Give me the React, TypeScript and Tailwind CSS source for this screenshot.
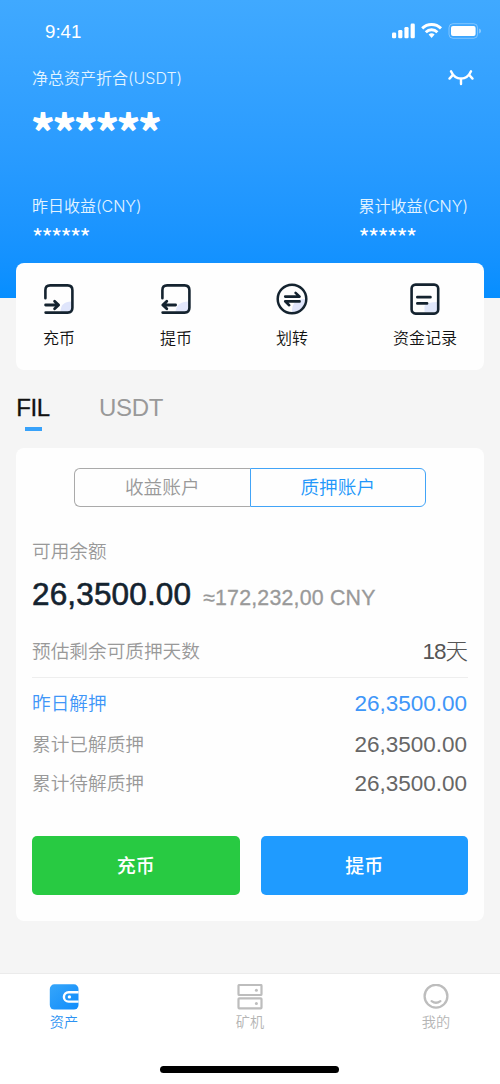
import React from "react";

const latin = "font-[Inter,'Noto_Sans_CJK_SC',sans-serif]";
const numeric = "font-['Liberation_Sans','Noto_Sans_CJK_SC',sans-serif]";
const ink = "#14232f";

function StatusIcons() {
  return (
    <svg width="90" height="16" viewBox="0 0 90 16" fill="white">
      <rect x="0" y="9.5" width="4.2" height="5.8" rx="1.3" />
      <rect x="6.2" y="7" width="4.2" height="8.3" rx="1.3" />
      <rect x="12.4" y="4" width="4.2" height="11.3" rx="1.3" />
      <rect x="18.6" y="0.6" width="4.2" height="14.7" rx="1.3" />
      <g fill="none" stroke="white" strokeWidth="2.9">
        <path d="M30.2 5.4 A13.4 13.4 0 0 1 49 5.4" />
        <path d="M33.8 9.2 A8.2 8.2 0 0 1 45.4 9.2" />
      </g>
      <path d="M36.6 11.6 A4.6 4.6 0 0 1 42.6 11.6 L39.6 14.9 Z" />
      <rect x="57" y="0.7" width="28.6" height="14.6" rx="4" fill="none" stroke="white" strokeOpacity="0.35" />
      <rect x="59" y="2.9" width="24.6" height="10.2" rx="2" />
      <path d="M87.2 5.5 Q89 6.3 89 8 Q89 9.7 87.2 10.5 Z" fillOpacity="0.45" />
    </svg>
  );
}

function ClosedEye() {
  return (
    <svg width="26" height="16" viewBox="0 0 26 16" fill="none" stroke="white" strokeWidth="2.4" strokeLinecap="round">
      <path d="M3 1.3 C5 5.8 8.6 8.600 13 8.600 S21 5.800 23 1.300" />
      <path d="M4.900 4.900 L1.500 8.600 M21.100 4.900 L24.500 8.600 M13 8.600 V14" />
    </svg>
  );
}

function DepositIcon() {
  return (
    <svg width="32" height="32" viewBox="0 0 32 32" fill="none" stroke={ink} strokeWidth="2.6" strokeLinecap="round" strokeLinejoin="round">
      <path d="M17.500 29 Q17.500 18.500 28.500 18.500 V25 Q28.500 30 24 30 H17.500 Z" fill="#dfe5fb" stroke="none" />
      <path d="M2.400 15.200 V7.200 Q2.400 2.400 7.200 2.400 H24.600 Q29.400 2.400 29.400 7.200 V24.800 Q29.400 29.600 24.600 29.600 H2.600" />
      <path d="M2.600 22 H15 M11.600 18.200 L15.600 22 L11.600 25.800" strokeWidth="2.800" />
    </svg>
  );
}

function WithdrawIcon() {
  return (
    <svg width="32" height="32" viewBox="0 0 32 32" fill="none" stroke={ink} strokeWidth="2.6" strokeLinecap="round" strokeLinejoin="round">
      <path d="M15.500 29 Q16.500 18.500 28.500 18.500 V25 Q28.500 30 24 30 H15.500 Z" fill="#e3e8fc" stroke="none" />
      <path d="M2.400 15.200 V7.200 Q2.400 2.400 7.200 2.400 H24.600 Q29.400 2.400 29.400 7.200 V24.800 Q29.400 29.600 24.600 29.600 H2.600" />
      <path d="M15.600 22 H3.400 M6.800 18.200 L2.800 22 L6.800 25.800" strokeWidth="2.800" />
    </svg>
  );
}

function TransferIcon() {
  return (
    <svg width="32" height="32" viewBox="0 0 32 32" fill="none" stroke={ink} strokeWidth="2.5" strokeLinecap="round" strokeLinejoin="round">
      <path d="M16 28 Q16 16 29 16 Q29 29 16 29 Z" fill="#dfe5fb" stroke="none" />
      <circle cx="16" cy="16" r="14.300" />
      <path d="M9.200 13.600 H23.600 L19.600 9.900 M23.600 18.400 H9.200 L13.200 22.200" strokeWidth="2.600" />
    </svg>
  );
}

function RecordIcon() {
  return (
    <svg width="32" height="32" viewBox="0 0 32 32" fill="none" stroke={ink} strokeWidth="2.6" strokeLinecap="round" strokeLinejoin="round">
      <path d="M15.500 29 V23 Q18 19 28.500 19 V29 Z" fill="#e0e7fa" stroke="none" />
      <rect x="2.600" y="1.600" width="26.600" height="29" rx="4" />
      <path d="M8.400 14.200 H21.400 M8.400 20.400 H18" strokeWidth="2.800" />
    </svg>
  );
}

function WalletIcon() {
  return (
    <svg width="30" height="26" viewBox="0 0 30 26">
      <defs>
        <linearGradient id="wallet" x1="0" y1="0" x2="1" y2="1">
          <stop offset="0" stopColor="#36a6fa" />
          <stop offset="1" stopColor="#108cfb" />
        </linearGradient>
      </defs>
      <rect x="0.800" y="0.300" width="28.700" height="25.200" rx="4.600" fill="url(#wallet)" />
      <path d="M29.600 8.200 H19.600 A4.700 4.700 0 0 0 19.600 17.600 H29.600" fill="none" stroke="white" strokeWidth="2.400" />
      <circle cx="20.400" cy="12.900" r="1.700" fill="white" />
    </svg>
  );
}

function ServerIcon() {
  return (
    <svg width="26" height="26" viewBox="0 0 26 26" fill="none" stroke="#bdbdbd" strokeWidth="2.2">
      <rect x="1.500" y="1" width="23" height="10" rx="0.800" />
      <rect x="1.500" y="14.300" width="23" height="10" rx="0.800" />
      <circle cx="19.400" cy="6.200" r="1.500" fill="#bdbdbd" stroke="none" />
      <circle cx="19.400" cy="19.400" r="1.500" fill="#bdbdbd" stroke="none" />
    </svg>
  );
}

function SmileIcon() {
  return (
    <svg width="26" height="26" viewBox="0 0 26 26" fill="none" stroke="#bdbdbd" strokeWidth="2.300" strokeLinecap="round">
      <circle cx="13" cy="12.200" r="11.400" />
      <path d="M8.600 17.100 Q13 20.300 17.400 17.100" />
    </svg>
  );
}

function Action({ icon, label, className }: { icon: React.ReactNode; label: string; className: string }) {
  return (
    <button className={`flex flex-col items-center ${className}`}>
      {icon}
      <span className="mt-[11px] text-[16px] leading-6 font-[350] whitespace-nowrap text-[#111]">{label}</span>
    </button>
  );
}

function Row({ label, value, className, valueClass }: { label: string; value: string; className: string; valueClass: string }) {
  return (
    <div className={`flex items-center justify-between ${className}`}>
      <span className="text-[18.67px] font-[350]">{label}</span>
      <span className={`${numeric} pr-px text-[22.5px] font-light ${valueClass}`}>{value}</span>
    </div>
  );
}

function Nav({ icon, label, className }: { icon: React.ReactNode; label: string; className: string }) {
  return (
    <button className={`flex w-[60px] flex-col items-center ${className}`}>
      {icon}
      <span className="mt-[2px] text-[14.2px] leading-5 font-[350]">{label}</span>
    </button>
  );
}

export default function App() {
  return (
    <div className={`flex h-[1084px] w-[500px] flex-col overflow-hidden bg-[#f5f5f5] ${latin}`}>
      <header className="h-[298px] shrink-0 bg-linear-to-b from-[#40a9ff] to-[#068eff] text-white">
        <div className="flex h-[62px] items-center justify-between pr-[18px] pl-[45px]">
          <span className={`${numeric} pt-[2px] text-[18.67px]`}>9:41</span>
          <StatusIcons />
        </div>
        <div className="flex h-8 items-center justify-between pr-[26px] pl-8">
          <span className="text-[16px] font-[350] text-[#e3f4ff]">净总资产折合(USDT)</span>
          <ClosedEye />
        </div>
        <div className="h-[102px] pt-[12px] pl-[31px] font-['Noto_Sans_CJK_SC',sans-serif] text-[45px] leading-[48px] font-black tracking-[-2.4px]">******</div>
        <div className="flex justify-between pr-8 pl-8">
          <div>
            <div className="text-[16px] leading-5 font-[350] text-[#e3f4ff]">昨日收益(CNY)</div>
            <div className="pt-[9px] font-['Noto_Sans_CJK_SC',sans-serif] text-[24px] leading-6 tracking-[-1.7px]">******</div>
          </div>
          <div>
            <div className="text-[16px] leading-5 font-[350] text-[#e3f4ff]">累计收益(CNY)</div>
            <div className="pt-[9px] font-['Noto_Sans_CJK_SC',sans-serif] text-[24px] leading-6 tracking-[-1.7px]">******</div>
          </div>
        </div>
      </header>

      <section className="relative mx-4 -mt-[35px] flex h-[107px] shrink-0 rounded-lg bg-[#fefefe] pt-5">
        <Action icon={<DepositIcon />} label="充币" className="ml-[27px] w-8" />
        <Action icon={<WithdrawIcon />} label="提币" className="ml-[85px] w-8" />
        <Action icon={<TransferIcon />} label="划转" className="ml-[84px] w-8" />
        <Action icon={<RecordIcon />} label="资金记录" className="ml-[84px] w-[66px]" />
      </section>

      <div className={`${numeric} flex h-[78px] shrink-0 pt-[22px] pl-4 text-[24px] leading-8`}>
        <div className="flex w-[34px] flex-col items-center text-[#111]">
          <span className="tracking-[-0.4px] [-webkit-text-stroke:0.3px_#111]">FIL</span>
          <span className="mt-[3px] h-1 w-[17px] bg-[#38a2fa]" />
        </div>
        <span className="ml-[49px] tracking-[-0.3px] text-[#999]">USDT</span>
      </div>

      <section className="mx-4 flex h-[473px] shrink-0 flex-col rounded-lg bg-[#fefefe] px-4 pt-5">
        <div className="flex h-[39px] w-[352px] self-center text-[18.67px] font-[350]">
          <button className="flex-1 rounded-l-[6px] border-[1.5px] border-r-0 border-[#aaa] pt-px text-[#999]">收益账户</button>
          <button className="flex-1 rounded-r-[6px] border-[1.5px] border-[#42a4f7] pt-px text-[#2196fa]">质押账户</button>
        </div>
        <div className="mt-[31px] text-[18.67px] leading-7 font-[350] text-[#999]">可用余额</div>
        <div className={`${numeric} mt-[8px] flex h-10 items-baseline leading-10`}>
          <span className="text-[31.5px] tracking-[0.15px] text-[#14232f] [-webkit-text-stroke:0.6px_#14232f]">26,3500.00</span>
          <span className="ml-[12px] text-[21.33px] tracking-[0.2px] text-[#999] [-webkit-text-stroke:0.3px_#999]">≈172,232,00 CNY</span>
        </div>
        <Row label="预估剩余可质押天数" value="18天" className="mt-[23px] h-[30px] text-[#999]" valueClass="tracking-[-1px] text-[#555]" />
        <div className="mt-[10px] h-px bg-[#eee]" />
        <Row label="昨日解押" value="26,3500.00" className="mt-[11px] h-[30px] text-[#3f96f8]" valueClass="" />
        <Row label="累计已解质押" value="26,3500.00" className="mt-[11px] h-[30px] text-[#999]" valueClass="text-[#666]" />
        <Row label="累计待解质押" value="26,3500.00" className="mt-[9px] h-[30px] text-[#999]" valueClass="text-[#666]" />
        <div className="mt-[37px] flex h-[59px] gap-[21px] text-[19px] font-medium text-white">
          <button className="flex-1 rounded-[5px] bg-[#28ca42] pt-[3px]">充币</button>
          <button className="flex-1 rounded-[5px] bg-[#1f9bff] pt-[3px]">提币</button>
        </div>
      </section>

      <footer className="mt-[52px] flex flex-1 flex-col items-center border-t border-[#ebebeb] bg-white">
        <nav className="flex w-full pt-[10px] text-[#b5b5b5]">
          <Nav icon={<WalletIcon />} label="资产" className="ml-[34px] text-[#2c92f2]" />
          <Nav icon={<ServerIcon />} label="矿机" className="ml-[126px]" />
          <Nav icon={<SmileIcon />} label="我的" className="ml-[126px]" />
        </nav>
        <div className="mt-[34px] mr-[2px] h-[7px] w-[179px] rounded-full bg-black" />
      </footer>
    </div>
  );
}
